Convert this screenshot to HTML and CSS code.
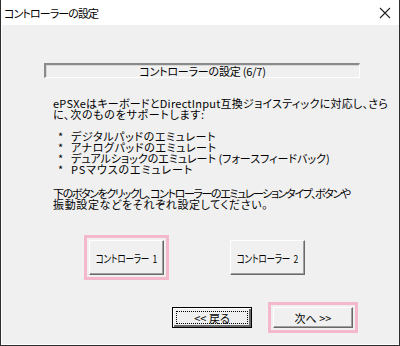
FILE: index.html
```html
<!DOCTYPE html>
<html lang="ja">
<head>
<meta charset="utf-8">
<link rel="stylesheet" href="styles.css">
</head>
<body>
<div class="window">
  <div class="titlebar">
    <span class="title">コントローラーの設定</span>
    <svg class="close" width="12" height="12" viewBox="0 0 12 12"><path d="M1 1 L11 11 M11 1 L1 11" stroke="#222" stroke-width="1.1" fill="none"/></svg>
  </div>
  <div class="content">
    <div class="header">コントローラーの設定 (6/7)</div>
    <div class="text">
      <p class="para"><span class="l l1">ePSXeはキーボードとDirectInput互換ジョイスティックに対応し、さら</span><span class="l l2">に、次のものをサポートします:</span></p>
      <ul class="list">
        <li class="l b1"><span class="star">*</span>デジタルパッドのエミュレート</li>
        <li class="l b2"><span class="star">*</span>アナログパッドのエミュレート</li>
        <li class="l b3"><span class="star">*</span>デュアルショックのエミュレート (フォースフィードバック)</li>
        <li class="l b4"><span class="star">*</span>PSマウスのエミュレート</li>
      </ul>
      <p class="para"><span class="l l3">下のボタンをクリックし、コントローラーのエミュレーションタイプ、ボタンや</span><span class="l l4">振動設定などをそれぞれ設定してください。</span></p>
    </div>
    <div class="ctrl-row">
      <div class="ring"><div class="btn big"><span class="cond">コントローラー&nbsp; 1</span></div></div>
      <div class="btn big second"><span class="cond">コントローラー&nbsp; 2</span></div>
    </div>
    <div class="nav-row">
      <div class="btn nav default"><span class="focus">&lt;&lt; 戻る</span></div>
      <div class="ring ring-nav"><div class="btn nav">次へ &gt;&gt;</div></div>
    </div>
  </div>
</div>
</body>
</html>
```
FILE: styles.css
```css
* { box-sizing: border-box; }
html, body { margin: 0; padding: 0; }
body {
  width: 400px;
  height: 346px;
  background: #f0f0f0;
  font-family: "Noto Sans CJK JP", "Liberation Sans", sans-serif;
  font-size: 11px;
  color: #000;
  overflow: hidden;
}
.window {
  width: 400px;
  height: 346px;
  border-left: 1px solid #2d2d2d;
  border-right: 1px solid #2d2d2d;
  border-bottom: 1px solid #2d2d2d;
  display: flex;
  flex-direction: column;
}
.titlebar {
  height: 25px;
  background: #fff;
  display: flex;
  align-items: center;
  justify-content: space-between;
  padding: 0 8px 0 3px;
}
.title {
  font-size: 11px;
  font-feature-settings: "palt";
  letter-spacing: -0.9px;
  color: #000;
}
.close { margin-top: 1px; }
.content {
  flex: 1;
  border-left: 1px solid #fff;
  border-bottom: 1px solid #fff;
  background: #f0f0f0;
  padding-top: 38px;
}
.header {
  margin-left: 42px;
  width: 316px;
  height: 15px;
  border-top: 2px solid #8a8a8a;
  border-left: 2px solid #8a8a8a;
  border-bottom: 1px solid #fff;
  border-right: 1px solid #fff;
  box-shadow: inset 1px 1px 0 #d8d8d8;
  text-align: center;
  font-size: 11px;
  line-height: 12px;
  font-feature-settings: "palt";
  letter-spacing: -0.2px;
  white-space: nowrap;
}
.text {
  margin-left: 51px;
  margin-top: 20px;
  line-height: 11px;
  font-feature-settings: "palt";
  white-space: nowrap;
}
.para { margin: 0; }
.l { display: block; height: 11px; }
.l1 { letter-spacing: 0.25px; }
.l2 { letter-spacing: 0.7px; }
.l3 { letter-spacing: -1.4px; }
.l4 { letter-spacing: 0.65px; }
.b1, .b2 { letter-spacing: 0.6px; }
.b3 { letter-spacing: 0; }
.b4 { letter-spacing: 0.9px; }
.list {
  list-style: none;
  margin: 11px 0 13px 5px;
  padding: 0;
}
.star { display: inline-block; width: 13px; letter-spacing: 0; }
.ctrl-row {
  display: flex;
  align-items: center;
  margin-top: 25px;
  margin-left: 82px;
}
.ring {
  border: 3px solid #f4b8cb;
  padding: 2px;
}
.btn {
  background: #f0f0f0;
  border-top: 1px solid #fff;
  border-left: 1px solid #fff;
  border-right: 1px solid #696969;
  border-bottom: 1px solid #696969;
  box-shadow: inset -1px -1px 0 #a0a0a0;
  display: flex;
  align-items: center;
  justify-content: center;
  font-size: 11px;
  font-feature-settings: "palt";
  white-space: nowrap;
}
.cond {
  display: inline-block;
  transform: scaleX(0.78);
  letter-spacing: -0.3px;
}
.big { width: 75px; height: 35px; }
.second { margin-left: 61px; }
.nav-row {
  display: flex;
  align-items: center;
  margin-top: 22px;
  margin-left: 170px;
}
.nav { width: 80px; height: 21px; }
.default {
  border: 1px solid #000;
  box-shadow: inset 1px 1px 0 #fff, inset -2px -2px 0 #696969;
  padding: 3px;
}
.focus {
  flex: 1;
  align-self: stretch;
  border: 1px dotted #000;
  display: flex;
  align-items: center;
  justify-content: center;
}
.ring-nav { margin-left: 16px; }
```
